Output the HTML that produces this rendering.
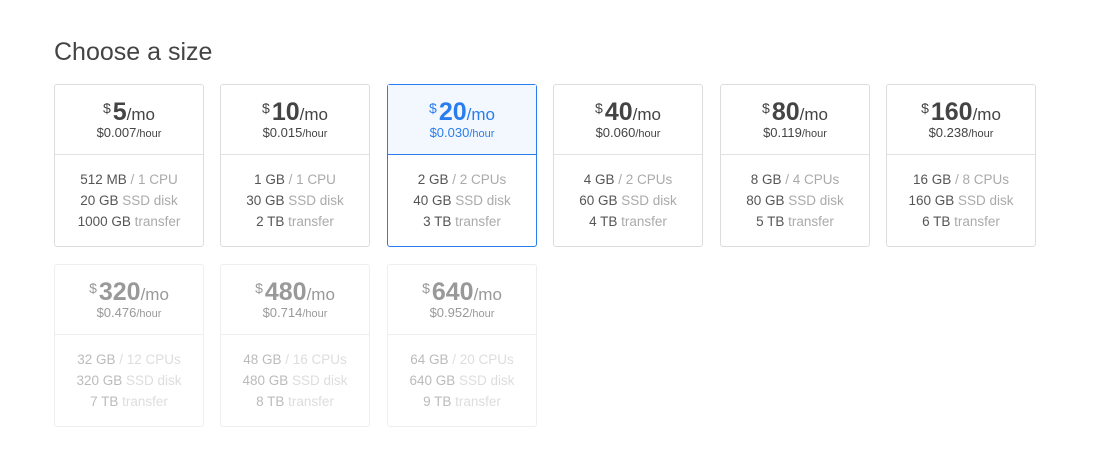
<!DOCTYPE html>
<html><head><style>
body{margin:0;width:1100px;height:473px;background:#fff;font-family:"Liberation Sans",sans-serif;position:relative;overflow:hidden}
h1{position:absolute;left:54px;top:38px;margin:0;font-weight:normal;font-size:25px;color:#444}
.c{position:absolute;width:150px;height:163px;box-sizing:border-box;border:1px solid #ddd;border-radius:3px;text-align:center;color:#444}
.t{height:69px;border-bottom:1px solid #e3e3e3;position:relative}
.p{position:absolute;top:13px;left:0;right:0;font-size:17px;color:#444}
.p .d{font-size:14px;vertical-align:7px;margin-right:2px}
.p b{font-size:25px}
.h{position:absolute;top:40px;left:0;right:0;font-size:13px}
.h small{font-size:11px}
.b{padding-top:14px;font-size:13.5px;line-height:21px;color:#555}
.b span{color:#aaa}
.sel{border-color:#2a7dee}.sel .t{background:#f3f8ff;border-color:#2a7dee}
.sel .p,.sel .h{color:#2a7dee}
.dis{border-color:#eee}.dis .t{border-color:#eee}
.dis .p,.dis .h{color:#999}.dis .b{color:#bbb}.dis .b span{color:#ddd}
</style></head><body>
<h1>Choose a size</h1>
<div class="c" style="left:54px;top:84px"><div class="t"><div class="p"><span class="d">$</span><b>5</b>/mo</div><div class="h">$0.007<small>/hour</small></div></div><div class="b">512 MB <span>/ 1 CPU</span><br>20 GB <span>SSD disk</span><br>1000 GB <span>transfer</span></div></div>
<div class="c" style="left:220px;top:84px"><div class="t"><div class="p"><span class="d">$</span><b>10</b>/mo</div><div class="h">$0.015<small>/hour</small></div></div><div class="b">1 GB <span>/ 1 CPU</span><br>30 GB <span>SSD disk</span><br>2 TB <span>transfer</span></div></div>
<div class="c sel" style="left:387px;top:84px"><div class="t"><div class="p"><span class="d">$</span><b>20</b>/mo</div><div class="h">$0.030<small>/hour</small></div></div><div class="b">2 GB <span>/ 2 CPUs</span><br>40 GB <span>SSD disk</span><br>3 TB <span>transfer</span></div></div>
<div class="c" style="left:553px;top:84px"><div class="t"><div class="p"><span class="d">$</span><b>40</b>/mo</div><div class="h">$0.060<small>/hour</small></div></div><div class="b">4 GB <span>/ 2 CPUs</span><br>60 GB <span>SSD disk</span><br>4 TB <span>transfer</span></div></div>
<div class="c" style="left:720px;top:84px"><div class="t"><div class="p"><span class="d">$</span><b>80</b>/mo</div><div class="h">$0.119<small>/hour</small></div></div><div class="b">8 GB <span>/ 4 CPUs</span><br>80 GB <span>SSD disk</span><br>5 TB <span>transfer</span></div></div>
<div class="c" style="left:886px;top:84px"><div class="t"><div class="p"><span class="d">$</span><b>160</b>/mo</div><div class="h">$0.238<small>/hour</small></div></div><div class="b">16 GB <span>/ 8 CPUs</span><br>160 GB <span>SSD disk</span><br>6 TB <span>transfer</span></div></div>
<div class="c dis" style="left:54px;top:264px"><div class="t"><div class="p"><span class="d">$</span><b>320</b>/mo</div><div class="h">$0.476<small>/hour</small></div></div><div class="b">32 GB <span>/ 12 CPUs</span><br>320 GB <span>SSD disk</span><br>7 TB <span>transfer</span></div></div>
<div class="c dis" style="left:220px;top:264px"><div class="t"><div class="p"><span class="d">$</span><b>480</b>/mo</div><div class="h">$0.714<small>/hour</small></div></div><div class="b">48 GB <span>/ 16 CPUs</span><br>480 GB <span>SSD disk</span><br>8 TB <span>transfer</span></div></div>
<div class="c dis" style="left:387px;top:264px"><div class="t"><div class="p"><span class="d">$</span><b>640</b>/mo</div><div class="h">$0.952<small>/hour</small></div></div><div class="b">64 GB <span>/ 20 CPUs</span><br>640 GB <span>SSD disk</span><br>9 TB <span>transfer</span></div></div>
</body></html>
